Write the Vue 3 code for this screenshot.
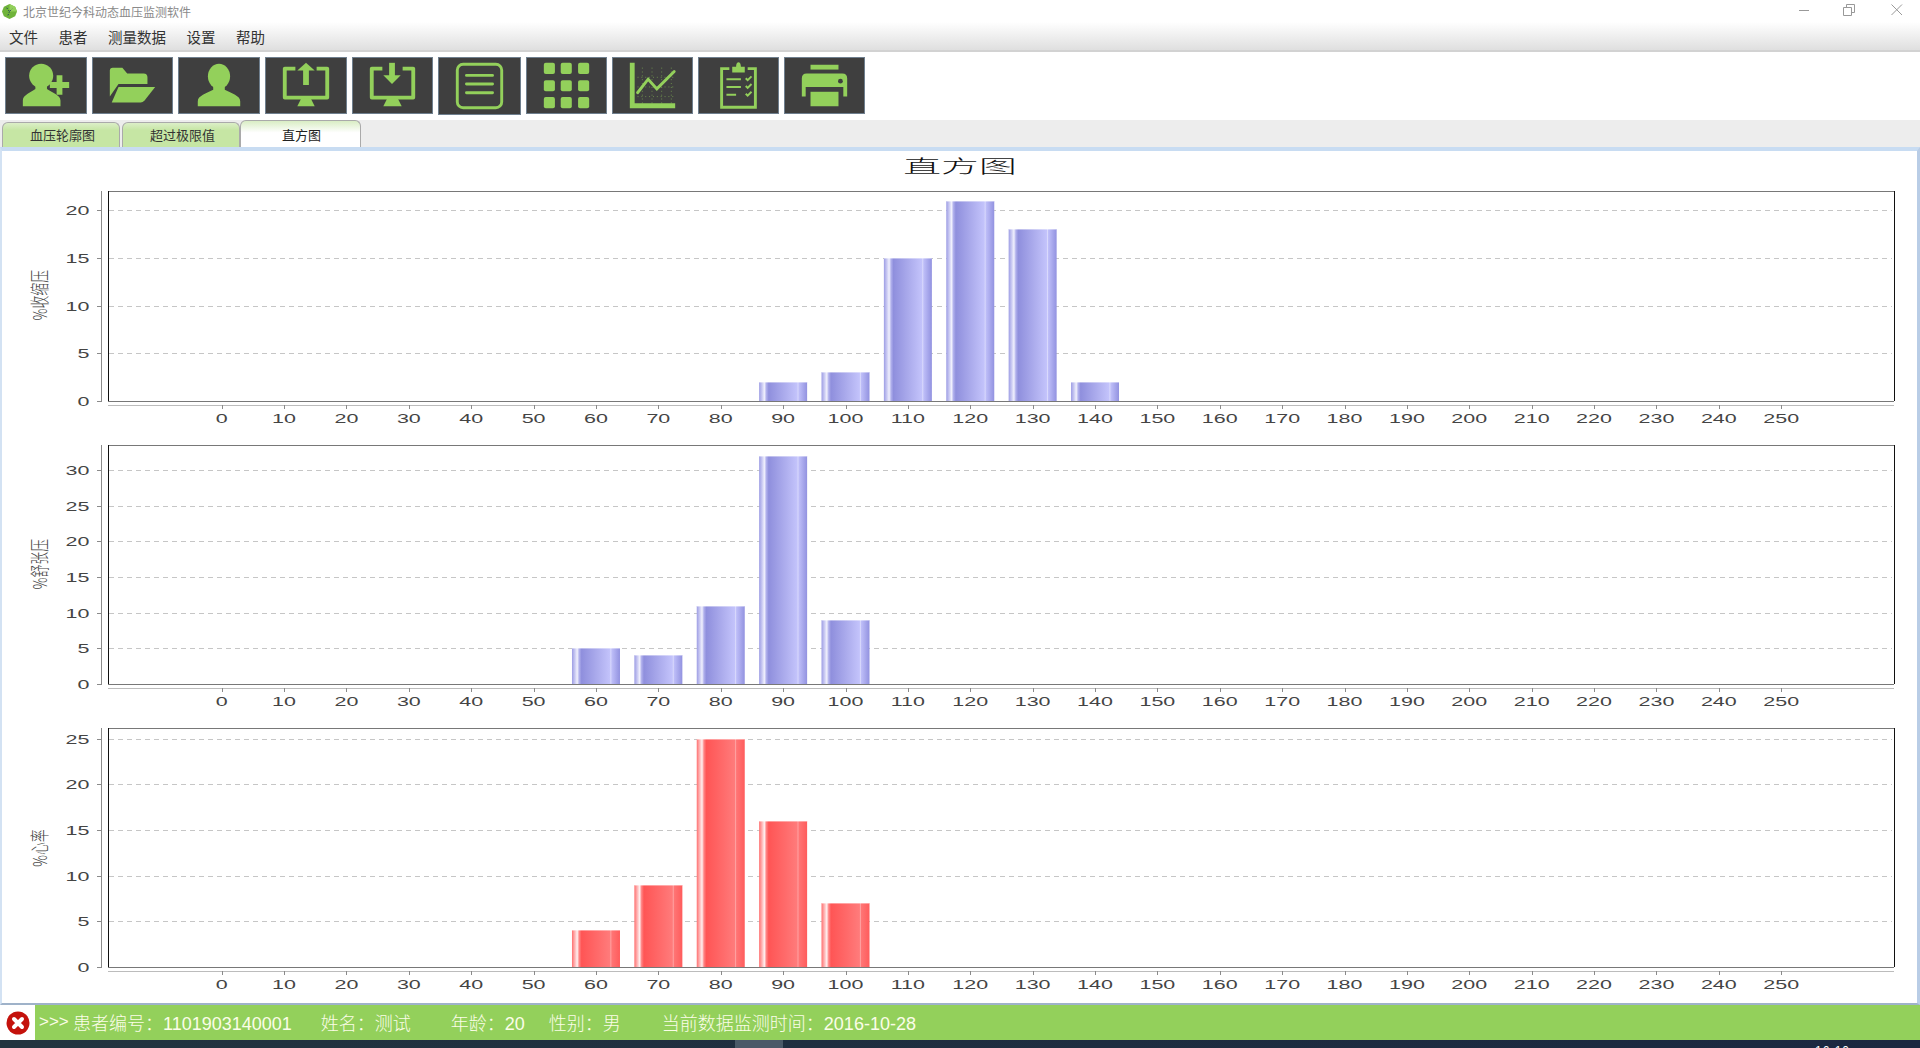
<template>
  <div class="app">
    <div class="titlebar">
      <svg class="logo" viewBox="0 0 16 16">
        <path d="M8 0 L14 3 L16 8 L14 13 L8 16 L2 13 L0 8 L2 3Z" fill="#6fb33a" />
        <path d="M8 0 L14 3 L16 8 L8 8Z" fill="#93d05b" />
        <path d="M5 4 L8 8 L11 5 M8 8 L6 13" stroke="#1d3c5c" stroke-width="1" stroke-dasharray="1.5 1.5" fill="none" />
      </svg>
      <span class="app-name">北京世纪今科动态血压监测软件</span>
      <div class="win-btns">
        <svg width="12" height="12" viewBox="0 0 12 12"><path d="M1 6.5H11" stroke="#999" /></svg>
        <svg width="12" height="12" viewBox="0 0 12 12"><path d="M.5 3.5H8.5V11.5H.5Z M3.5 3V.5H11.5V8.5H9" stroke="#999" fill="none" /></svg>
        <svg width="14" height="12" viewBox="0 0 14 12"><path d="M1.5 .5L12 11 M12 .5L1.5 11" stroke="#999" fill="none" /></svg>
      </div>
    </div>

    <div class="menubar">
      <span v-for="m in menus" :key="m">{{ m }}</span>
    </div>

    <div class="toolbar">
      <button class="tool wide">
        <svg viewBox="0 0 82 57">
          <ellipse cx="36" cy="18.5" rx="12.5" ry="12.5" />
          <path d="M17 50V44C17 38 25 36 30 32V27H42V32C47 36 56 38 56 44V50Z" />
          <path d="M55 18V38M45 28H65" class="thick" />
        </svg>
      </button>
      <button class="tool">
        <svg viewBox="0 0 81 57">
          <path d="M17 13Q17 10 20 10H30L35 16H52Q56 16 56 20V27H26L17 40Z" />
          <path d="M26 30H64L53 44Q51 46 49 46H19Z" />
        </svg>
      </button>
      <button class="tool wide">
        <svg viewBox="0 0 82 57">
          <ellipse cx="41" cy="19" rx="11.5" ry="13" />
          <path d="M19 50V45C19 39 28 37 35 33V28H47V33C54 37 63 39 63 45V50Z" />
        </svg>
      </button>
      <button class="tool wide">
        <svg viewBox="0 0 82 57">
          <path d="M30 11H19V41H63V11H52" class="frame" />
          <path d="M36 42H46L50 50H32Z" />
          <path d="M41 28V10" class="thick" />
          <path d="M32 13L41 5L50 13Z" />
        </svg>
      </button>
      <button class="tool">
        <svg viewBox="0 0 81 57">
          <path d="M30 11H19V41H62V11H51" class="frame" />
          <path d="M35 42H46L50 50H31Z" />
          <path d="M40 5V20" class="thick" />
          <path d="M31 18L40 27L49 18Z" />
        </svg>
      </button>
      <button class="tool tall">
        <svg viewBox="0 0 83 58">
          <rect x="18.5" y="6.5" width="46" height="45" rx="6" class="thin" />
          <path d="M28 18H55M28 27H55M28 36H55" class="line" />
        </svg>
      </button>
      <button class="tool">
        <svg viewBox="0 0 81 57">
          <rect v-for="c in dots" :key="c.k" :x="c.x" :y="c.y" width="11.5" height="11.5" rx="2" />
        </svg>
      </button>
      <button class="tool">
        <svg viewBox="0 0 81 57">
          <path d="M25 20H64M25 30H64M25 40H64M30 10V47M40 10V47M50 10V47M60 10V47" class="grid" />
          <path d="M17 5H22V47H64V52H17Z" />
          <path d="M25 36L36 22L45 32L63 14" class="line" />
        </svg>
      </button>
      <button class="tool">
        <svg viewBox="0 0 81 57">
          <path d="M31 11H23V51H58V11H50" class="thin" />
          <path d="M34 15V9H38C38 3 43 3 43 9H47V15Z" />
          <path d="M28 22H43M28 30H43M28 38H38" class="hair" />
          <path d="M48 21L50 23L54 19M48 29L50 31L54 27M48 37L50 39L54 35" class="hair" />
        </svg>
      </button>
      <button class="tool">
        <svg viewBox="0 0 81 57">
          <rect x="26" y="7" width="29" height="5" />
          <path d="M22 16H59Q64 16 64 21V40H60V30H21V40H17V21Q17 16 22 16Z" />
          <rect x="26" y="35" width="29" height="15" />
          <circle cx="57" cy="24" r="2.5" fill="#3f3f3f" />
        </svg>
      </button>
    </div>

    <div class="tabs">
      <div class="tab">血压轮廓图</div>
      <div class="tab">超过极限值</div>
      <div class="tab active">直方图</div>
    </div>

    <div class="frame-box">
      <div class="chart-title"><span>直方图</span></div>
      <svg
        v-for="c in charts"
        :key="c.label"
        class="chart"
        :viewBox="`2 ${c.y0} 1915 ${c.h}`"
        :style="{ height: c.h + 'px' }"
      >
        <defs>
          <linearGradient :id="'bar' + c.color" x1="0" x2="1" y1="0" y2="0">
            <stop v-for="s in stops[c.color]" :key="s[0]" :offset="s[0]" :stop-color="s[1]" />
          </linearGradient>
        </defs>
        <line
          v-for="t in c.ticks.filter(v => v > 0)"
          :key="'g' + t"
          x1="109"
          x2="1892"
          :y1="yOf(c, t) + 0.5"
          :y2="yOf(c, t) + 0.5"
          class="gridline"
        />
        <g v-for="b in c.bars" :key="b[0]">
          <rect
            :x="xOf(b[0]) - 24"
            :y="yOf(c, b[1])"
            width="48"
            :height="c.bottom - yOf(c, b[1])"
            :fill="`url(#bar${c.color})`"
          />
          <rect :x="xOf(b[0]) - 24" :y="yOf(c, b[1])" width="48" height="1" fill="#fff" opacity="0.4" />
        </g>

        <path :d="`M108 ${c.top + 0.5}H1894`" class="plot-h" />
        <path :d="`M108 ${c.bottom + 0.5}H1894`" class="plot-h" />
        <path :d="`M108.5 ${c.top}V${c.bottom}M1894.5 ${c.top}V${c.bottom}`" class="plot-v" />

        <path :d="`M101.5 ${c.top}V${c.bottom + 1}`" class="axis" />
        <g v-for="t in c.ticks" :key="'y' + t">
          <path :d="`M97 ${yOf(c, t) + 0.5}H101`" class="axis" />
          <text :transform="`translate(89.5 ${yOf(c, t) + 4.5}) scale(1.72 1)`" text-anchor="end" class="num">{{ t }}</text>
        </g>

        <path :d="`M108 ${c.bottom + 4.5}H1894`" class="axis-x" />
        <g v-for="v in xVals" :key="'x' + v">
          <path :d="`M${Math.round(xOf(v)) + 0.5} ${c.bottom + 4}V${c.bottom + 8}`" class="axis" />
          <text :transform="`translate(${xOf(v)} ${c.bottom + 22}) scale(1.72 1)`" text-anchor="middle" class="num">{{ v }}</text>
        </g>

        <text :transform="`translate(47 ${c.labelY}) rotate(-90) scale(0.68 1)`" text-anchor="middle" class="ylabel">{{ c.label }}</text>
      </svg>
    </div>

    <div class="statusbar">
      <div class="err">
        <svg width="24" height="24" viewBox="0 0 24 24">
          <circle cx="12" cy="12" r="11.5" fill="#c4120c" />
          <path d="M8 8L16 16M16 8L8 16" stroke="#fff" stroke-width="4" stroke-linecap="round" />
        </svg>
      </div>
      <div class="info">
        <span class="arrows">&gt;&gt;&gt;</span>
        <span class="s1">患者编号：1101903140001</span>
        <span class="s2">姓名：测试</span>
        <span class="s3">年龄：20</span>
        <span class="s4">性别：男</span>
        <span class="s5">当前数据监测时间：2016-10-28</span>
      </div>
    </div>

    <div class="taskbar">
      <div class="task-item"></div>
      <span class="clock">16:10</span>
    </div>
  </div>
</template>

<script setup>
const menus = ['文件', '患者', '测量数据', '设置', '帮助']

const dots = []
;[17, 34.5, 52.5].forEach((x, i) => {
  ;[5, 23, 40.5].forEach((y, j) => {
    dots.push({ k: i + '-' + j, x, y })
  })
})

const stops = {
  blue: [
    [0, '#9d9de4'], [0.06, '#c8c8f2'], [0.11, '#f0f0fd'], [0.15, '#b0b0ec'], [0.2, '#8f8fdd'],
    [0.55, '#aeaeee'], [0.79, '#c3c3fb'], [0.81, '#dadafc'], [0.83, '#bebef8'], [1, '#9292e0']
  ],
  red: [
    [0, '#ff7070'], [0.06, '#ffb4b4'], [0.11, '#fff0f0'], [0.15, '#ff8484'], [0.2, '#ff5555'],
    [0.55, '#ff6b6b'], [0.79, '#ff7b7b'], [0.81, '#ffa4a4'], [0.83, '#ff7575'], [1, '#ff5c5c']
  ]
}

const xVals = []
for (let v = 0; v <= 250; v += 10) xVals.push(v)

const charts = [
  {
    label: '%收缩压', color: 'blue', y0: 187, h: 254, top: 191, bottom: 401, unit: 9.54, labelY: 295,
    ticks: [0, 5, 10, 15, 20],
    bars: [[90, 2], [100, 3], [110, 15], [120, 21], [130, 18], [140, 2]]
  },
  {
    label: '%舒张压', color: 'blue', y0: 441, h: 283, top: 445, bottom: 684, unit: 7.13, labelY: 564,
    ticks: [0, 5, 10, 15, 20, 25, 30],
    bars: [[60, 5], [70, 4], [80, 11], [90, 32], [100, 9]]
  },
  {
    label: '%心率', color: 'red', y0: 724, h: 279, top: 728, bottom: 967, unit: 9.14, labelY: 848,
    ticks: [0, 5, 10, 15, 20, 25],
    bars: [[60, 4], [70, 9], [80, 25], [90, 16], [100, 7]]
  }
]

const xOf = v => 221.7 + v * 6.238
const yOf = (c, v) => Math.round(c.bottom - v * c.unit)
</script>

<style scoped>
.app {
  width: 1920px;
  height: 1048px;
  overflow: hidden;
  display: flex;
  flex-direction: column;
  background: #fff;
  font-family: "Liberation Sans", "Noto Sans CJK SC", sans-serif;
}

.titlebar {
  height: 22px;
  display: flex;
  align-items: center;
  padding-left: 2px;
  background: #fff;
}

.logo {
  width: 15px;
  height: 15px;
}

.app-name {
  margin-left: 6px;
  font-size: 12px;
  color: #8a8a8a;
}

.win-btns {
  margin-left: auto;
  display: flex;
  align-items: center;
  gap: 33px;
  padding-right: 16px;
  margin-top: -2px;
}

.win-btns svg:nth-child(2) {
  margin-right: 2px;
}

.menubar {
  height: 28px;
  display: flex;
  align-items: center;
  gap: 20.5px;
  padding-left: 9px;
  font-size: 14.5px;
  color: #333;
  background: linear-gradient(#fff, #dfdfdf);
  border-bottom: 2px solid #d2d2d2;
}

.toolbar {
  height: 68px;
  box-sizing: border-box;
  display: flex;
  align-items: flex-start;
  gap: 5px;
  padding: 5px 0 0 5px;
}

.tool {
  width: 81px;
  height: 57px;
  padding: 0;
  background: #3f3f3f;
  border: 1px solid #6f7f8e;
  flex: none;
}

.tool.wide {
  width: 82px;
}

.tool.tall {
  width: 83px;
  height: 58px;
}

.tool svg {
  display: block;
  width: 100%;
  height: 100%;
  margin: -1px;
  box-sizing: content-box;
  padding: 1px;
  fill: #93d05b;
}

.thick {
  fill: none;
  stroke: #93d05b;
  stroke-width: 6;
}

.frame {
  fill: none;
  stroke: #93d05b;
  stroke-width: 4;
  stroke-linejoin: round;
}

.thin {
  fill: none;
  stroke: #93d05b;
  stroke-width: 3;
}

.line {
  fill: none;
  stroke: #93d05b;
  stroke-width: 3;
  stroke-linecap: round;
}

.hair {
  fill: none;
  stroke: #93d05b;
  stroke-width: 2;
}

.grid {
  fill: none;
  stroke: #6d8f4e;
  stroke-width: 1;
  stroke-dasharray: 1 3;
}

.tabs {
  height: 27px;
  display: flex;
  align-items: flex-end;
  padding-left: 2px;
  gap: 2px;
  background: #ededed;
}

.tab {
  width: 118px;
  height: 25px;
  box-sizing: border-box;
  display: flex;
  align-items: center;
  justify-content: center;
  padding: 0 0 2px 3px;
  font-size: 13px;
  color: #333;
  background: linear-gradient(#dcefc8, #c6e6a4 30%);
  border: 1px solid #aaa;
  border-bottom: none;
  border-radius: 6px 6px 0 0;
}

.tab.active {
  width: 121px;
  height: 27px;
  margin-left: -2px;
  padding: 1px 0 0 2px;
  color: #222;
  background: linear-gradient(#d9edc4, #fff 45%);
}

.frame-box {
  height: 858px;
  box-sizing: border-box;
  border-top: 4px solid #c8dcf2;
  border-left: 2px solid #d3e2f3;
  border-right: 3px solid #b9cde6;
  border-bottom: 2px solid #9fb2c9;
  display: flex;
  flex-direction: column;
}

.chart-title {
  height: 36px;
  box-sizing: border-box;
  display: flex;
  align-items: center;
  justify-content: center;
  padding-bottom: 9px;
  font-size: 18px;
  font-weight: 300;
  color: #111;
}

.chart-title span {
  transform: scaleX(2.1);
}

.chart {
  display: block;
  width: 1915px;
  flex: none;
}

.gridline {
  stroke: #c6c6c6;
  stroke-width: 1;
  stroke-dasharray: 5 4;
}

.plot-h {
  stroke: #787878;
  stroke-width: 1;
  fill: none;
}

.plot-v {
  stroke: #111;
  stroke-width: 1;
  fill: none;
}

.axis {
  stroke: #8a8a8a;
  stroke-width: 1;
  fill: none;
}

.axis-x {
  stroke: #bcbcbc;
  stroke-width: 1;
  fill: none;
}

.num {
  font-family: "Liberation Sans", sans-serif;
  font-size: 12.5px;
  fill: #444;
}

.ylabel {
  font-family: "Noto Sans CJK SC", sans-serif;
  font-size: 19px;
  font-weight: 300;
  fill: #444;
}

.statusbar {
  height: 35px;
  display: flex;
  background: #93d05b;
}

.err {
  width: 35px;
  background: #fff;
  display: flex;
  align-items: center;
  justify-content: center;
  padding-top: 1px;
  box-sizing: border-box;
}

.info {
  flex: 1;
  display: flex;
  align-items: center;
  font-size: 18px;
  color: #fbfde8;
  white-space: nowrap;
  padding: 0 0 2px 4px;
  font-weight: 300;
}

.arrows {
  width: 34px;
  font-size: 17px;
}

.s2 { margin-left: 29px; }
.s3 { margin-left: 40px; }
.s4 { margin-left: 24px; }
.s5 { margin-left: 41px; }

.taskbar {
  height: 8px;
  position: relative;
  overflow: hidden;
  background: linear-gradient(90deg, #22343f, #1b2840);
}

.task-item {
  position: absolute;
  left: 735px;
  top: 0;
  width: 48px;
  height: 8px;
  background: #4a5a68;
}

.clock {
  position: absolute;
  left: 1815px;
  top: 4px;
  font-size: 12px;
  letter-spacing: 1px;
  color: #fff;
}
</style>
